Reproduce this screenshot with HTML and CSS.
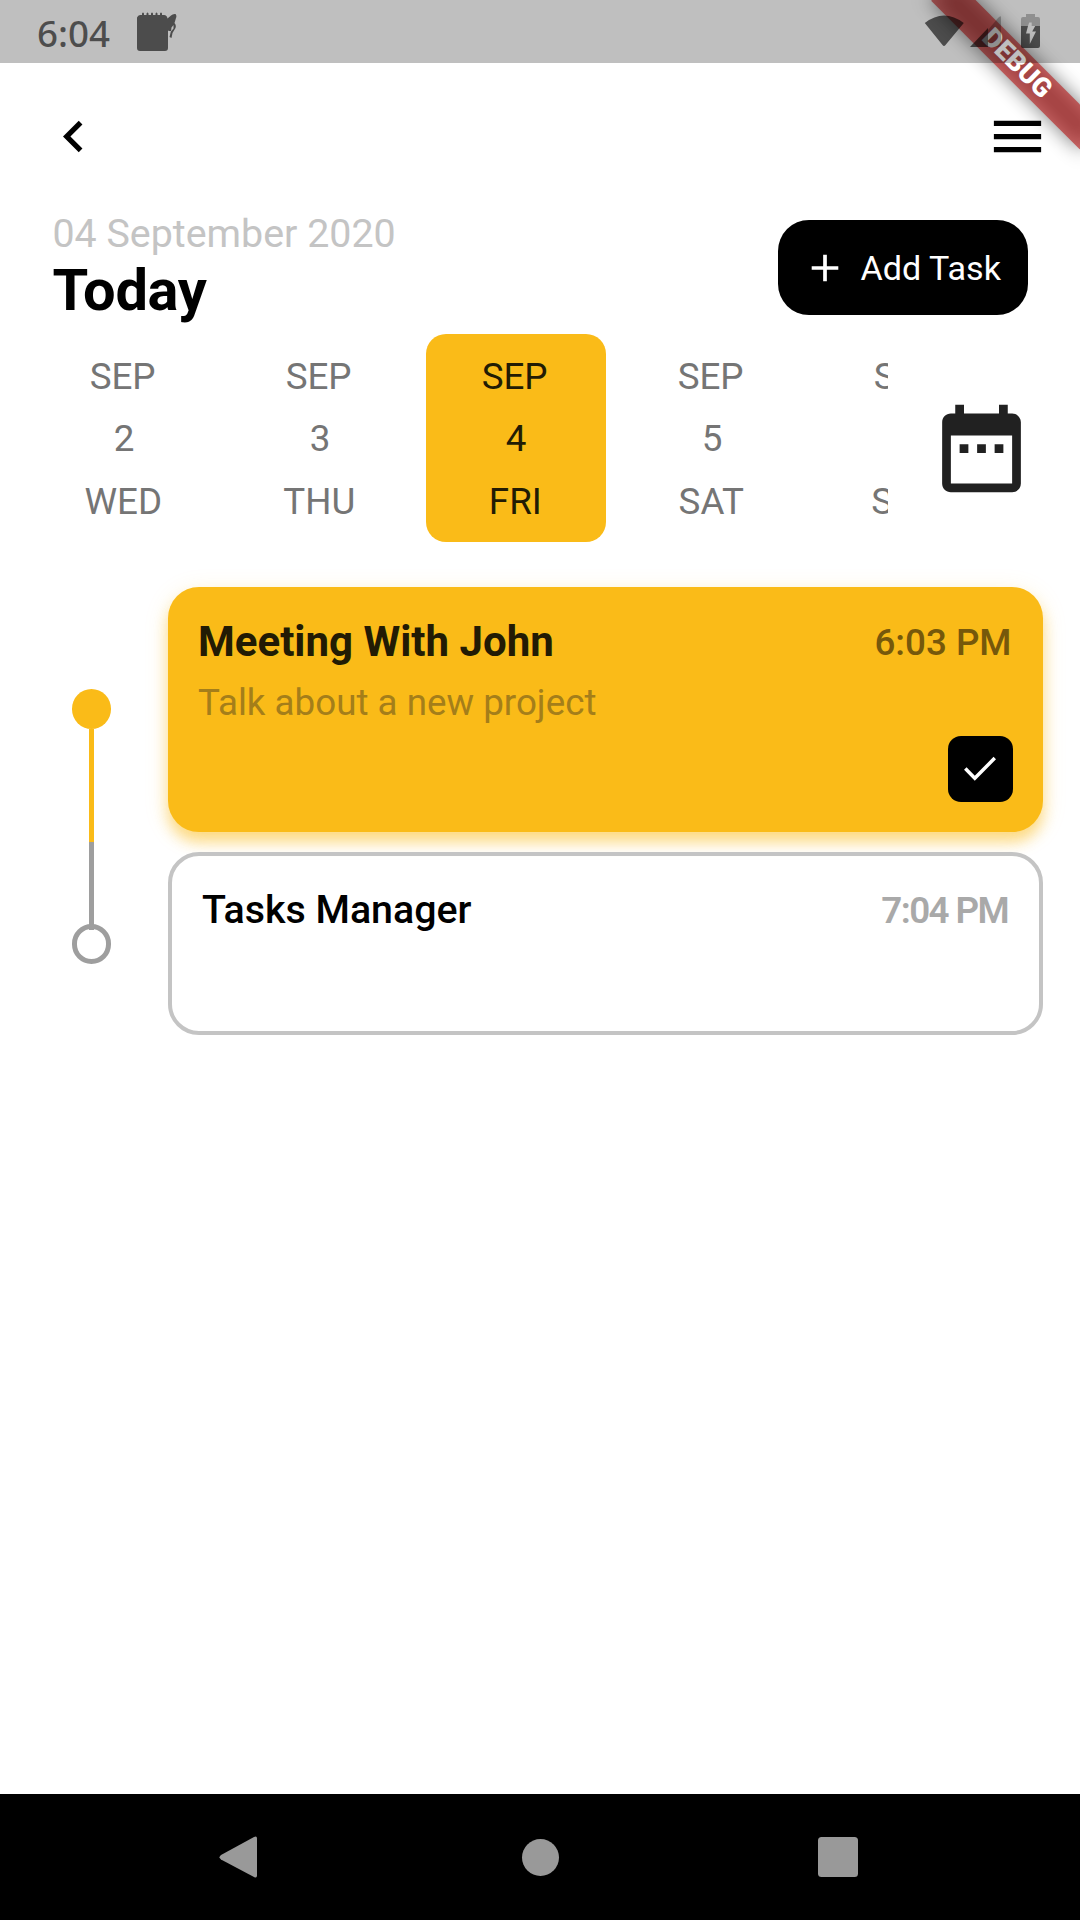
FILE: index.html
```html
<!DOCTYPE html>
<html lang="en">
<head>
<meta charset="utf-8">
<title>Tasks</title>
<link rel="stylesheet" href="styles.css">
</head>
<body>
<div class="screen">
  <header class="status-bar">
    <div class="status-left">
      <span class="clock">6:04</span>
      <svg class="note-icon" width="40" height="40" viewBox="0 0 40 40">
        <path d="M3 3h2V1.500q1-2 2 0V3h2.500V1.500q1-2 2 0V3H14V1.500q1-2 2 0V3h2.500V1.500q1-2 2 0V3H23V1.500q1-2 2 0V3h2q3 0 3.500 3.500L34 3.500Q36 1.500 38.500 2q1.500 1.500.5 4l-1.500 5q2 2 1 5l-3 5L34.500 26l-2-1 1.500-6-2.500 0L31 18V36q0 3-3 3H3q-3 0-3-3V5.500Q1 3 3 3zM36.500 13l-2 2.500-.5 4 2.500-3z" fill-rule="evenodd"/>
      </svg>
    </div>
    <svg class="signals" width="118" height="36" viewBox="0 0 118 36">
      <path d="M0.800 9Q20-6 39.800 9L21.500 31q-1.500 2-3 0z"/>
      <path class="faint" d="M64 16 74 4q3-3 3-.5V30q0 3-3 3H64z"/>
      <path d="M46 33 64 14v19z"/>
      <path class="faint" d="M97 12V5q0-2 2-2h3V0h9v3h3q2 0 2 2v7h-4.800h-3.500V8.500h-2.500l-1.200 3.500z"/>
      <path fill-rule="evenodd" d="M97 12h7l-2 7.500h3.800V30L112 17.500h-3.800l3-5.500H116v20q0 2-2 2H99q-2 0-2-2z"/>
    </svg>
  </header>

  <nav class="app-bar">
    <svg width="63" height="63" viewBox="0 0 24 24"><path d="M15.410 7.410 14 6l-6 6 6 6 1.410-1.410L10.830 12z"/></svg>
    <svg width="63" height="63" viewBox="0 0 24 24"><path d="M3 18h18v-2H3v2zm0-5h18v-2H3v2zm0-7v2h18V6H3z"/></svg>
  </nav>

  <section class="heading">
    <div>
      <div class="full-date">04 September 2020</div>
      <h1 class="today">Today</h1>
    </div>
    <button class="add-task">
      <svg width="28" height="28" viewBox="0 0 28 28"><path d="M14 .7v26.600M.7 14h26.600" fill="none" stroke="#fff" stroke-width="3.700"/></svg>
      <span>Add Task</span>
    </button>
  </section>

  <section class="calendar">
    <div class="days">
      <div class="day"><span class="month">SEP</span><span>2</span><span class="weekday">WED</span></div>
      <div class="day"><span class="month">SEP</span><span>3</span><span class="weekday">THU</span></div>
      <div class="day selected"><span class="month">SEP</span><span>4</span><span class="weekday">FRI</span></div>
      <div class="day"><span class="month">SEP</span><span>5</span><span class="weekday">SAT</span></div>
      <div class="day"><span class="month">SEP</span><span>6</span><span class="weekday">SUN</span></div>
    </div>
    <svg class="calendar-icon" width="105" height="105" viewBox="0 0 24 24"><path d="M9 11H7v2h2v-2zm4 0h-2v2h2v-2zm4 0h-2v2h2v-2zm2-7h-1V2h-2v2H8V2H6v2H5c-1.110 0-1.990.9-1.990 2L3 20c0 1.100.89 2 2 2h14c1.100 0 2-.9 2-2V6c0-1.100-.9-2-2-2zm0 16H5V9h14v11z"/></svg>
  </section>

  <main class="tasks">
    <div class="timeline">
      <span class="dot"></span>
      <span class="line done"></span>
      <span class="line"></span>
      <span class="ring"></span>
    </div>
    <div class="cards">
      <article class="card active">
        <div class="card-top">
          <h2 class="title">Meeting With John</h2>
          <span class="time">6:03 PM</span>
        </div>
        <p class="description">Talk about a new project</p>
        <span class="check"><svg width="32" height="25" viewBox="0 0 32 25"><path d="M1.300 12.500 10.800 22.300 30.800 2" fill="none" stroke="#fff" stroke-width="3.500"/></svg></span>
      </article>
      <article class="card">
        <div class="card-top">
          <h2 class="title">Tasks Manager</h2>
          <span class="time">7:04 PM</span>
        </div>
      </article>
    </div>
  </main>

  <footer class="nav-bar">
    <svg width="44" height="44" viewBox="0 0 44 44"><path d="M4 20 37 2q3-1.500 3 1.500v37q0 3-3 1.500L4 24.500q-3-2.200 0-4.500z"/></svg>
    <svg width="44" height="44" viewBox="0 0 44 44"><circle cx="23.500" cy="22.500" r="18.500"/></svg>
    <svg width="44" height="44" viewBox="0 0 44 44"><rect x="2" y="2" width="40" height="40" rx="3.500"/></svg>
  </footer>

  <div class="banner-corner"><div class="banner">DEBUG</div></div>
</div>
</body>
</html>
```

FILE: styles.css
```css
* {
  box-sizing: border-box;
}

body {
  margin: 0;
  font-family: Roboto, sans-serif;
  color: #000;
  background: #fff;
}

svg {
  display: block;
  flex: none;
}

h1, h2, p {
  margin: 0;
}

.screen {
  position: relative;
  display: flex;
  flex-direction: column;
  width: 1080px;
  height: 1920px;
  overflow: hidden;
}

/* translucent system bar, tints whatever is below it */
.status-bar {
  position: relative;
  z-index: 2;
  display: flex;
  justify-content: space-between;
  height: 63px;
  padding: 0 38px 0 37px;
  background: rgba(0, 0, 0, 0.25);
  fill: rgba(0, 0, 0, 0.6);
}

.status-left {
  display: flex;
  gap: 27px;
}

.clock {
  font: 500 36.75px/50px "Noto Sans", sans-serif;
  padding-top: 8px;
  color: rgba(0, 0, 0, 0.6);
}

.note-icon {
  margin-top: 12px;
}

.signals {
  margin-top: 14px;
}

.faint {
  fill: rgba(0, 0, 0, 0.25);
}

.app-bar {
  display: flex;
  align-items: center;
  justify-content: space-between;
  height: 147px;
  padding: 0 31.500px 0 42px;
}

.heading {
  display: flex;
  justify-content: space-between;
  height: 124px;
  padding: 0 52.5px;
}

.full-date {
  padding-top: 1px;
  font-size: 39.375px;
  line-height: 46px;
  color: #c4c4c4;
}

.today {
  margin-top: -1px;
  font-size: 57.75px;
  line-height: 68px;
  font-weight: 700;
  letter-spacing: -0.3px;
}

.add-task {
  display: flex;
  align-items: center;
  gap: 22px;
  width: 250px;
  height: 95px;
  margin-top: 10px;
  padding: 0 0 0 33px;
  border: 0;
  border-radius: 31px;
  background: #000;
  color: #fff;
  font: 400 34.125px/40px Roboto, sans-serif;
  white-space: nowrap;
}

.calendar {
  display: flex;
  gap: 41px;
  height: 208px;
}

.days {
  display: flex;
  gap: 16px;
  width: 888px;
  padding-left: 34px;
  overflow: hidden;
}

.day {
  flex: none;
  display: flex;
  flex-direction: column;
  align-items: center;
  gap: 19.500px;
  width: 180px;
  padding-top: 20.800px;
  border-radius: 20px;
  font-size: 36.75px;
  line-height: 43px;
  color: #757575;
}

.month {
  padding-right: 2.800px;
}

.weekday {
  padding-right: 1.400px;
}

.day.selected {
  background: #fabb18;
  color: #221b04;
}

.calendar-icon {
  margin-top: 61.500px;
  fill: #212121;
}

.tasks {
  display: flex;
  flex: 1;
  padding: 44.500px 37px 0 72px;
}

.timeline {
  display: flex;
  flex-direction: column;
  align-items: center;
  width: 39px;
  margin-right: 57px;
  padding-top: 102.500px;
}

.dot {
  width: 39px;
  height: 39.500px;
  border-radius: 50%;
  background: #fabb18;
}

.line {
  width: 5px;
  height: 88px;
  background: #9e9e9e;
}

.line.done {
  height: 113.500px;
  background: #fabb18;
}

.ring {
  width: 39.500px;
  height: 39.500px;
  margin-top: -6px;
  border: 5px solid #9e9e9e;
  border-radius: 50%;
}

.cards {
  display: flex;
  flex: 1;
  flex-direction: column;
  gap: 20.500px;
}

.card {
  height: 183px;
  padding: 28px 30px;
  border: 4px solid #c4c4c4;
  border-radius: 31px;
}

.card.active {
  display: flex;
  flex-direction: column;
  height: 245px;
  padding: 30px 30px 30px 30px;
  border: 0;
  background: #fabb18;
  box-shadow: 0 10px 14px rgba(250, 187, 24, 0.48), 0 5px 26px rgba(250, 187, 24, 0.14);
}

.card-top {
  display: flex;
  align-items: center;
  justify-content: space-between;
  height: 50px;
}

.title {
  font-size: 39.375px;
  font-weight: 500;
}

.time {
  padding: 3px 1px 0 0;
  font-size: 36.75px;
  font-weight: 600;
  letter-spacing: -1.600px;
  color: #a9a9a9;
}

.active .time {
  padding: 2px 1.500px 0 0;
  font-weight: 500;
  letter-spacing: 0;
  color: #76580b;
}

.active .title {
  font-size: 42px;
  font-weight: 700;
  color: #221b04;
}

.description {
  margin-top: 14.500px;
  font-size: 36.75px;
  line-height: 43px;
  color: #a47e1a;
}

.check {
  display: flex;
  align-items: center;
  justify-content: center;
  align-self: flex-end;
  width: 65.500px;
  height: 66px;
  margin-top: 12px;
  border-radius: 13px;
  background: #000;
}

.nav-bar {
  display: flex;
  align-items: center;
  justify-content: space-between;
  height: 126px;
  padding: 0 220px 0 217px;
  background: #000;
  fill: #999;
}

/* diagonal ribbon lying over the top right corner */
.banner-corner {
  position: absolute;
  top: 0;
  right: 0;
  width: 260px;
  height: 260px;
  overflow: hidden;
}

.banner {
  position: absolute;
  top: 73.500px;
  left: 155px;
  width: 210px;
  height: 31.500px;
  transform: rotate(45deg);
  transform-origin: 105px -73.500px;
  color: #fff;
  font-size: 26.775px;
  font-weight: 900;
  line-height: 31.500px;
  text-align: center;
}

.banner::before,
.banner::after {
  content: "";
  position: absolute;
  inset: 0;
}

.banner::before {
  z-index: -2;
  background: rgba(0, 0, 0, 0.5);
  filter: blur(9.600px);
}

.banner::after {
  z-index: -1;
  background: rgba(183, 28, 28, 0.63);
}
```
